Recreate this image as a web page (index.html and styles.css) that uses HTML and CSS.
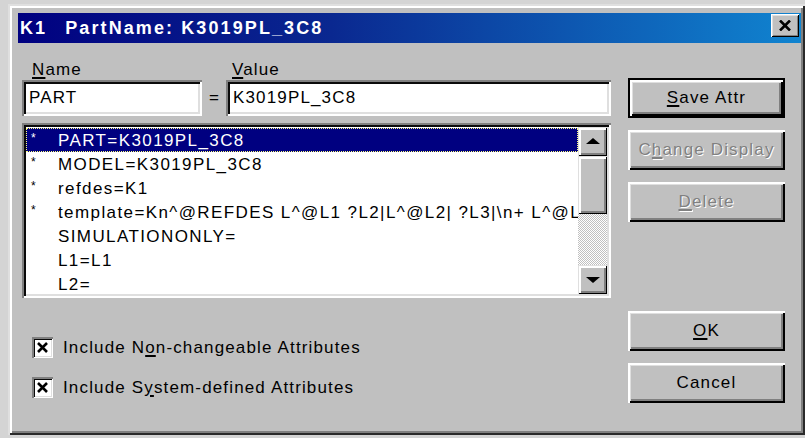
FILE: index.html
```html
<!DOCTYPE html>
<html>
<head>
<meta charset="utf-8">
<title>Edit Part Properties</title>
<link rel="stylesheet" href="styles.css">
</head>
<body>
<div class="window">
  <div class="titlebar">
    <span class="title">K1<span class="title-gap"></span>PartName: K3019PL_3C8</span>
    <span class="close">
      <svg width="12" height="11" viewBox="0 0 12 11"><path d="M1 0.5 L11 10.5 M11 0.5 L1 10.5" stroke="#000" stroke-width="2.6" fill="none"/></svg>
    </span>
  </div>
  <div class="client">
    <div class="main">
      <div class="labels">
        <span class="label-name"><u>N</u>ame</span>
        <span></span>
        <span class="label-value"><u>V</u>alue</span>
      </div>
      <div class="fields">
        <div class="field">PART</div>
        <div class="equals">=</div>
        <div class="field">K3019PL_3C8</div>
      </div>
      <div class="listbox">
        <div class="rows">
          <div class="row selected"><span class="mark">*</span>PART=K3019PL_3C8</div>
          <div class="row"><span class="mark">*</span>MODEL=K3019PL_3C8</div>
          <div class="row"><span class="mark">*</span>refdes=K1</div>
          <div class="row"><span class="mark">*</span>template=Kn^@REFDES L^@L1 ?L2|L^@L2| ?L3|\n+ L^@L3|</div>
          <div class="row"><span class="mark"></span>SIMULATIONONLY=</div>
          <div class="row"><span class="mark"></span>L1=L1</div>
          <div class="row"><span class="mark"></span>L2=</div>
        </div>
        <div class="scrollbar">
          <div class="sb-btn"><span class="arrow-up"></span></div>
          <div class="sb-thumb"></div>
          <div class="sb-track"></div>
          <div class="sb-btn"><span class="arrow-down"></span></div>
        </div>
      </div>
      <div class="checks">
        <div class="check-row"><span class="checkbox"><svg width="11" height="11" viewBox="0 0 11 11"><path d="M1 1 L10 10 M10 1 L1 10" stroke="#000" stroke-width="2.6" fill="none"/></svg></span><span class="check-label">Include N<u>o</u>n-changeable Attributes</span></div>
        <div class="check-row"><span class="checkbox"><svg width="11" height="11" viewBox="0 0 11 11"><path d="M1 1 L10 10 M10 1 L1 10" stroke="#000" stroke-width="2.6" fill="none"/></svg></span><span class="check-label">Include S<u>y</u>stem-defined Attributes</span></div>
      </div>
    </div>
    <div class="side">
      <div class="btn default"><span class="btn-face"><u>S</u>ave Attr</span></div>
      <div class="btn disabled"><span class="btn-face">C<u>h</u>ange Display</span></div>
      <div class="btn disabled"><span class="btn-face"><u>D</u>elete</span></div>
      <div class="side-spacer"></div>
      <div class="btn"><span class="btn-face"><u>O</u>K</span></div>
      <div class="btn"><span class="btn-face">Cancel</span></div>
    </div>
  </div>
</div>
</body>
</html>
```
FILE: styles.css
```css
html, body {
  margin: 0;
  padding: 0;
}

body {
  width: 805px;
  height: 438px;
  overflow: hidden;
  background: #d4d4d4;
  font-family: "Liberation Sans", Arial, sans-serif;
  font-size: 17px;
  letter-spacing: 1.15px;
  color: #000;
}

u {
  text-decoration-thickness: 1.5px;
  text-underline-offset: 2px;
}

/* dialog frame */
.window {
  margin: 4px 0 0 8px;
  width: 797px;
  height: 431px;
  box-sizing: border-box;
  padding: 9px 4px 0 10px;
  background: #c0c0c0;
  box-shadow:
    inset 2px 2px #dfdfdf,
    inset -2px -2px #2a2a2a,
    inset 4px 4px #ffffff,
    inset -4px -4px #808080;
}

.titlebar {
  height: 30px;
  display: flex;
  align-items: flex-start;
  background: linear-gradient(to right, #000080 0%, #0a2890 40%, #1084d0 100%);
}

.title {
  flex: 1;
  padding-left: 2px;
  color: #fff;
  font-weight: bold;
  font-size: 18px;
  line-height: 30px;
  letter-spacing: 2.1px;
  white-space: nowrap;
}

.title-gap {
  display: inline-block;
  width: 18px;
}

.close {
  width: 28px;
  height: 23px;
  margin: 1px 2px 0 0;
  box-sizing: border-box;
  display: flex;
  align-items: center;
  justify-content: center;
  background: #c0c0c0;
  box-shadow:
    inset 1px 1px #ffffff,
    inset -1px -1px #000000,
    inset 2px 2px #dfdfdf,
    inset -2px -2px #808080;
}

/* body of the dialog */
.client {
  display: flex;
  gap: 17px;
  padding-left: 4px;
}

.main {
  width: 589px;
  padding-top: 17px;
}

.labels,
.fields {
  display: grid;
  grid-template-columns: 180px 24px 385px;
}

.labels {
  height: 20px;
  line-height: 20px;
}

.label-name {
  padding-left: 10px;
}

.label-value {
  padding-left: 6px;
}

.fields {
  height: 36px;
}

.field {
  height: 36px;
  box-sizing: border-box;
  padding: 4px 4px 4px 7px;
  line-height: 28px;
  background: #fff;
  white-space: nowrap;
  overflow: hidden;
  box-shadow:
    inset 2px 2px #808080,
    inset -2px -2px #ffffff,
    inset 4px 4px #0a0a0a,
    inset -4px -4px #dfdfdf;
}

.equals {
  text-align: center;
  line-height: 36px;
  letter-spacing: 0;
}

/* attribute list */
.listbox {
  margin-top: 7px;
  height: 175px;
  box-sizing: border-box;
  padding: 4px;
  display: flex;
  background: #fff;
  box-shadow:
    inset 2px 2px #808080,
    inset -2px -2px #ffffff,
    inset 4px 4px #0a0a0a,
    inset -4px -4px #dfdfdf;
}

.rows {
  flex: 1;
  overflow: hidden;
  padding-top: 1px;
}

.row {
  height: 24px;
  box-sizing: border-box;
  padding-top: 2px;
  line-height: 22px;
  letter-spacing: 1.4px;
  white-space: nowrap;
}

.row.selected {
  background: #000080;
  color: #fff;
  outline: 1px dotted #ffff80;
  outline-offset: -1px;
}

.mark {
  display: inline-block;
  width: 32px;
  padding-left: 5px;
  box-sizing: border-box;
  vertical-align: top;
  font-size: 12px;
  line-height: 17px;
  letter-spacing: 0;
}

.scrollbar {
  width: 29px;
  display: flex;
  flex-direction: column;
}

.sb-btn,
.sb-thumb {
  background: #c0c0c0;
  box-shadow:
    inset 1px 1px #dfdfdf,
    inset -1px -1px #000000,
    inset 3px 3px #ffffff,
    inset -3px -3px #808080;
}

.sb-btn {
  height: 29px;
  display: flex;
  align-items: center;
  justify-content: center;
}

.sb-thumb {
  height: 58px;
}

.sb-track {
  flex: 1;
  background: repeating-conic-gradient(#ffffff 0 25%, #c0c0c0 0 50%) 0 0 / 2px 2px;
}

.arrow-up,
.arrow-down {
  width: 0;
  height: 0;
  border-left: 7px solid transparent;
  border-right: 7px solid transparent;
}

.arrow-up {
  border-bottom: 6px solid #000;
  margin-top: -2px;
}

.arrow-down {
  border-top: 6px solid #000;
}

/* option checkboxes */
.checks {
  margin-top: 39px;
  padding-left: 10px;
  display: flex;
  flex-direction: column;
  gap: 19px;
}

.check-row {
  display: flex;
  align-items: center;
  gap: 10px;
  height: 21px;
}

.checkbox {
  width: 21px;
  height: 21px;
  box-sizing: border-box;
  display: flex;
  align-items: center;
  justify-content: center;
  background: #fff;
  box-shadow:
    inset 2px 2px #808080,
    inset -1px -1px #ffffff,
    inset 3px 3px #0a0a0a,
    inset -2px -2px #dfdfdf;
}

.check-label {
  line-height: 21px;
  white-space: nowrap;
}

/* command buttons */
.side {
  width: 157px;
  padding-top: 35px;
  display: flex;
  flex-direction: column;
  gap: 12px;
}

.side-spacer {
  height: 89px;
  margin: -12px 0;
}

.btn {
  height: 40px;
  box-sizing: border-box;
  display: flex;
}

.btn-face {
  flex: 1;
  display: flex;
  align-items: center;
  justify-content: center;
  padding-bottom: 1px;
  background: #c0c0c0;
  white-space: nowrap;
  box-shadow:
    inset 2px 2px #ffffff,
    inset -2px -2px #000000,
    inset 3px 3px #dfdfdf,
    inset -4px -4px #808080;
}

.btn.default {
  border: 2px solid #000;
}

.btn.disabled .btn-face {
  color: #808080;
  text-shadow: 1px 1px #ffffff;
}
```
